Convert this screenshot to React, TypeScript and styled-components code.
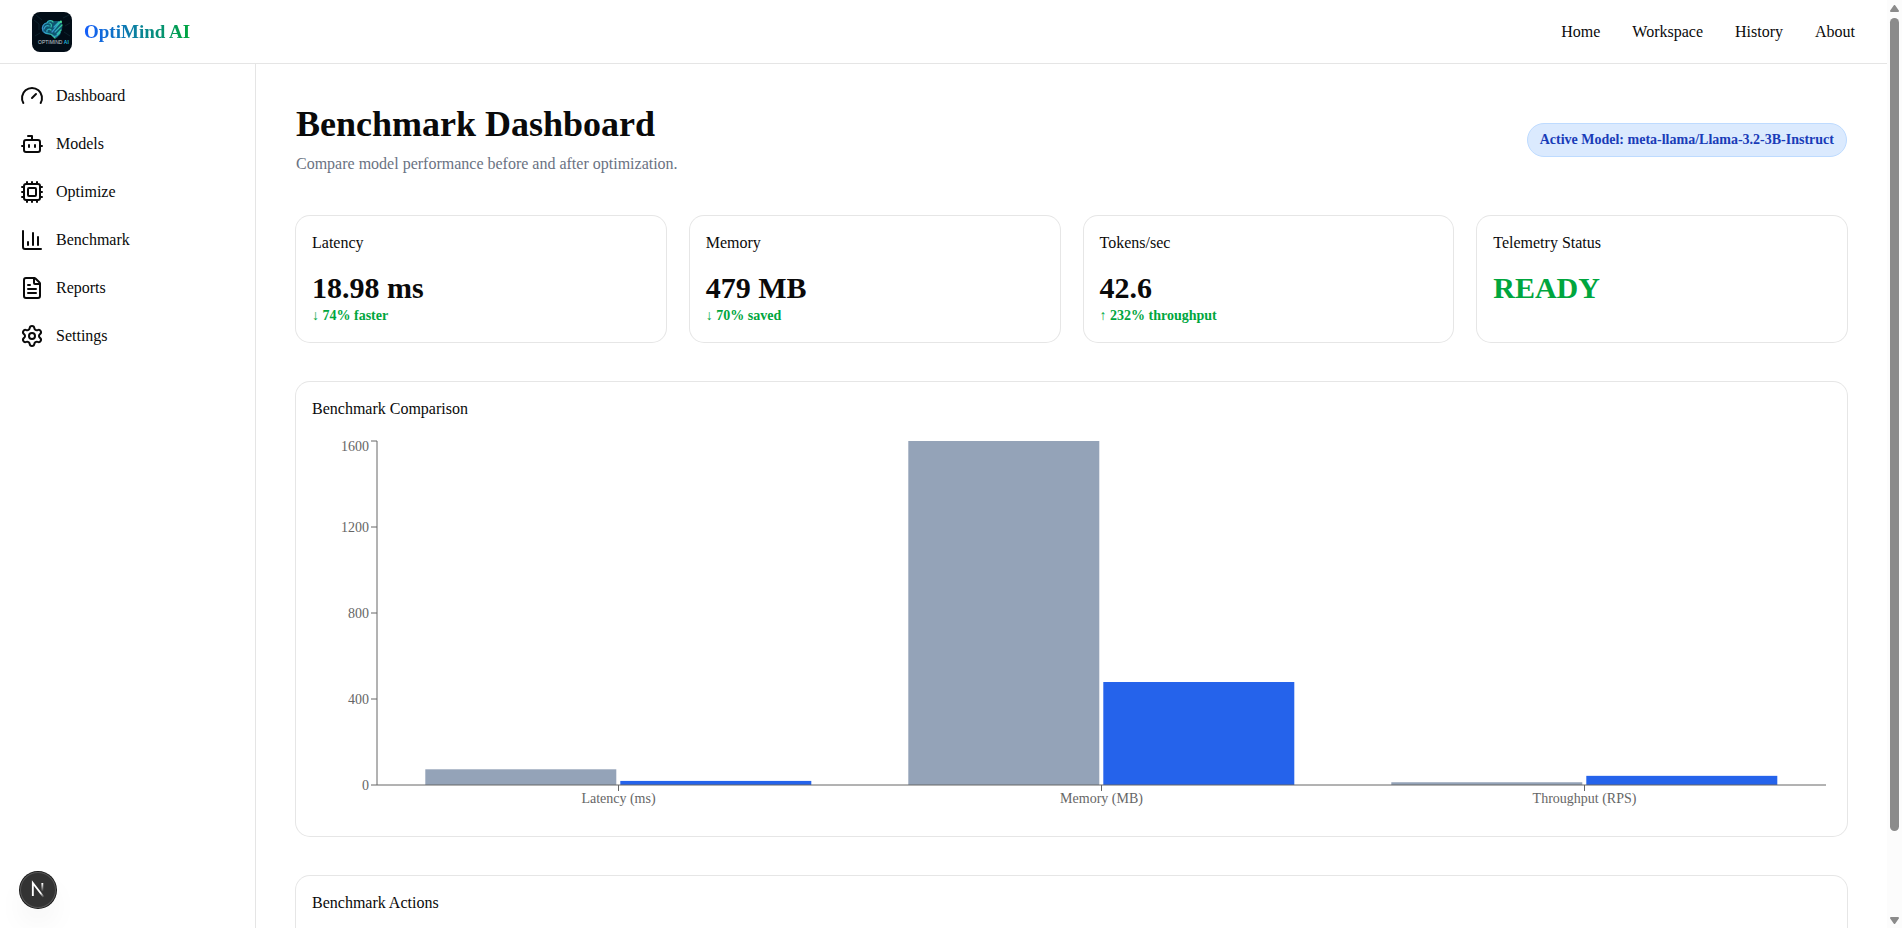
import React, { useEffect, useRef, useState } from "react";
import styled, { createGlobalStyle } from "styled-components";
import { Gauge, Bot, Cpu, ChartColumn, FileText, Settings } from "lucide-react";

const GlobalStyle = createGlobalStyle`
  *, *::before, *::after { box-sizing: border-box; }
  body {
    margin: 0;
    background: #ffffff;
    color: #0a0a0a;
    font-family: "Liberation Serif", "Times New Roman", serif;
    font-size: 16px;
    line-height: 24px;
  }
  h1, h2, p { margin: 0; }
  a { color: inherit; text-decoration: none; }
`;

const Shell = styled.div`
  display: flex;
  height: 100vh;
`;

const Page = styled.div`
  flex: 1;
  min-width: 0;
  display: flex;
  flex-direction: column;
`;

const Header = styled.header`
  flex: none;
  height: 64px;
  padding: 0 32px;
  display: flex;
  align-items: center;
  justify-content: space-between;
  border-bottom: 1px solid #e5e5e5;
`;

const Brand = styled.a`
  display: flex;
  align-items: center;
  gap: 12px;
`;

const BrandName = styled.span`
  font-size: 19px;
  line-height: 28px;
  font-weight: 700;
  color: transparent;
  background: linear-gradient(to right, #155dfc, #00a63e);
  background-clip: text;
`;

const TopNav = styled.nav`
  display: flex;
  gap: 32px;
`;

const Body = styled.div`
  flex: 1;
  min-height: 0;
  display: flex;
`;

const Sidebar = styled.nav`
  flex: none;
  width: 256px;
  padding: 8px;
  border-right: 1px solid #e5e5e5;
`;

const SideLink = styled.a`
  display: flex;
  align-items: center;
  gap: 12px;
  height: 48px;
  padding: 0 12px;
`;

const Main = styled.main`
  flex: 1;
  min-width: 0;
  padding: 40px;
  display: flex;
  flex-direction: column;
  gap: 40px;
  overflow-y: auto;
  scrollbar-width: none;

  & > * { flex: none; }
`;

const TitleRow = styled.div`
  display: flex;
  align-items: center;
  justify-content: space-between;
`;

const Title = styled.h1`
  font-size: 36px;
  line-height: 40px;
  font-weight: 700;
`;

const Subtitle = styled.p`
  margin-top: 8px;
  color: #6a7282;
`;

const ModelBadge = styled.span`
  padding: 6px 12px;
  border: 1px solid #bedbff;
  border-radius: 17px;
  background: #dbeafe;
  color: #193cb8;
  font-size: 14px;
  line-height: 20px;
  font-weight: 700;
`;

const StatGrid = styled.div`
  display: grid;
  grid-template-columns: repeat(4, 1fr);
  gap: 24px;
`;

const Card = styled.section`
  display: flex;
  flex-direction: column;
  gap: 16px;
  min-height: 120px;
  padding: 16px;
  border-radius: 14px;
  box-shadow: 0 0 0 1px #e6e6e6;
`;

const CardTitle = styled.h2`
  font-size: 16px;
  line-height: 22px;
  font-weight: 400;
`;

const StatValue = styled.p<{ $good?: boolean }>`
  font-size: 30px;
  line-height: 36px;
  font-weight: 700;
  color: ${(p) => (p.$good ? "#00a63e" : "inherit")};
`;

const StatNote = styled.p`
  font-size: 14px;
  line-height: 20px;
  font-weight: 700;
  color: #00a63e;
`;

const ChartBox = styled.div`
  height: 384px;

  svg { display: block; }
  text { font-size: 14px; fill: #666666; }
`;

const DevButton = styled.button`
  position: fixed;
  left: 20px;
  bottom: 20px;
  width: 36px;
  height: 36px;
  padding: 0;
  border: 0;
  border-radius: 50%;
  background: #333333;
  box-shadow: 0 0 0 1px #171717, inset 0 0 0 1px #545454,
    0 16px 32px -8px rgba(0, 0, 0, 0.14);

  svg { display: block; }
`;

const Rail = styled.div`
  flex: none;
  width: 15px;
  padding: 5px 3px 4px;
  display: flex;
  flex-direction: column;
  align-items: center;
  gap: 6px;
  background: #fcfcfc;

  svg { display: block; flex: none; }
`;

const RailTrack = styled.div`
  flex: 1;
  width: 9px;
`;

const RailThumb = styled.div`
  height: 91%;
  border-radius: 5px;
  background: #8b8b8b;
`;

const sideItems = [
  { label: "Dashboard", Icon: Gauge },
  { label: "Models", Icon: Bot },
  { label: "Optimize", Icon: Cpu },
  { label: "Benchmark", Icon: ChartColumn },
  { label: "Reports", Icon: FileText },
  { label: "Settings", Icon: Settings },
];

const stats = [
  { title: "Latency", value: "18.98 ms", note: "↓ 74% faster" },
  { title: "Memory", value: "479 MB", note: "↓ 70% saved" },
  { title: "Tokens/sec", value: "42.6", note: "↑ 232% throughput" },
  { title: "Telemetry Status", value: "READY", good: true },
];

const chartData = [
  { name: "Latency (ms)", before: 73, after: 18.98 },
  { name: "Memory (MB)", before: 1600, after: 479 },
  { name: "Throughput (RPS)", before: 12.8, after: 42.6 },
];

const yTicks = [0, 400, 800, 1200, 1600];

function BenchmarkChart() {
  const box = useRef<HTMLDivElement>(null);
  const [width, setWidth] = useState(0);

  useEffect(() => {
    const el = box.current;
    if (!el) return;
    const measure = () => setWidth(el.clientWidth);
    measure();
    const observer = new ResizeObserver(measure);
    observer.observe(el);
    return () => observer.disconnect();
  }, []);

  const left = 65;
  const top = 5;
  const bottom = 349;
  const right = width - 5;
  const band = (right - left) / chartData.length;
  const barWidth = Math.floor((band * 0.8 - 4) / 2);
  const y = (v: number) => bottom - (v / 1600) * (bottom - top);

  return (
    <ChartBox ref={box}>
      {width > 200 && (
        <svg width={width} height={384} role="img" aria-label="Benchmark comparison">
          {chartData.map((d, i) => {
            const x = left + band * (i + 0.1);
            return (
              <g key={d.name}>
                <rect x={x} y={y(d.before)} width={barWidth} height={bottom - y(d.before)} fill="#94a3b8" />
                <rect x={x + barWidth + 4} y={y(d.after)} width={barWidth} height={bottom - y(d.after)} fill="#2563eb" />
              </g>
            );
          })}
          <g stroke="#666666">
            <line x1={left} x2={right} y1={bottom} y2={bottom} />
            {chartData.map((d, i) => {
              const x = left + band * (i + 0.5);
              return <line key={d.name} x1={x} x2={x} y1={bottom} y2={bottom + 6} />;
            })}
            <line x1={left} x2={left} y1={top} y2={bottom} />
            {yTicks.map((t) => (
              <line key={t} x1={left - 6} x2={left} y1={y(t)} y2={y(t)} />
            ))}
          </g>
          {chartData.map((d, i) => (
            <text key={d.name} x={left + band * (i + 0.5)} y={bottom + 18} textAnchor="middle">
              {d.name}
            </text>
          ))}
          {yTicks.map((t) => (
            <text key={t} x={left - 8} y={Math.max(y(t), 10) + 5} textAnchor="end">
              {t}
            </text>
          ))}
        </svg>
      )}
    </ChartBox>
  );
}

function BrandLogo() {
  return (
    <svg width="40" height="40" viewBox="0 0 40 40" aria-hidden="true">
      <defs>
        <linearGradient id="brain" x1="0" y1="0" x2="1" y2="0">
          <stop offset="0" stopColor="#3a8fd0" />
          <stop offset="0.5" stopColor="#2cb0bd" />
          <stop offset="1" stopColor="#3fd68e" />
        </linearGradient>
      </defs>
      <rect width="40" height="40" rx="8" fill="#020d17" />
      <g fill="none" stroke="#12303a" strokeWidth="0.6">
        <path d="M2 8 L7 12 L7 18 M4 3 L10 8 M31 6 L37 3 M33 14 L38 11 M32 20 L38 24 M3 24 L8 21" />
      </g>
      <path
        d="M10 18 C9 14 12 11 15 10 C17 7.500 20 8 22 9 L29 9 L30 12 C31 15 30 17 29 20 C29 23 26 24 25 26 L22 26 C21 24 19 23 17 22 C13 22 11 21 10 18 Z"
        fill="#0e5470"
      />
      <g fill="none" stroke="url(#brain)" strokeWidth="1.2" strokeLinecap="round">
        <path d="M11 19 C9 15 12 11 15 11 C16 8 20 8 21 10 M12 17 C13 14 15 13 17 14 M15 20 C14 18 17 16 19 18 M17 11 C19 11 20 13 19 15 M12 20 C15 23 18 21 20 23 L23 26" />
        <path d="M20 20 L29 9 M22 15 L27 10 M23 20 L30 13 M25 22 L29 18 M21 24 C24 25 27 23 28 20" />
      </g>
      <circle cx="29" cy="10" r="1" fill="#4be39a" />
      <text x="6" y="32" fontFamily="Liberation Sans, Arial, sans-serif" fontSize="5" fill="#c4ced6">
        OPTIMIND{" "}
        <tspan fill="#20b5dc" fontWeight="700">
          AI
        </tspan>
      </text>
    </svg>
  );
}

function DevMark() {
  return (
    <svg width="36" height="36" viewBox="0 0 36 36" fill="none" aria-hidden="true">
      <g transform="translate(10.5 10)">
        <path d="M13.3 15.2 L2.34 1 V14" stroke="url(#mark-a)" strokeWidth="1.86" />
        <path d="M11.825 1 V13.1" stroke="url(#mark-b)" strokeWidth="1.86" />
      </g>
      <defs>
        <linearGradient id="mark-a" x1="9.95555" y1="11.1226" x2="15.4778" y2="17.9671" gradientUnits="userSpaceOnUse">
          <stop stopColor="white" />
          <stop offset="0.604072" stopColor="white" stopOpacity="0" />
        </linearGradient>
        <linearGradient id="mark-b" x1="11.8222" y1="1.40039" x2="11.791" y2="9.62542" gradientUnits="userSpaceOnUse">
          <stop stopColor="white" />
          <stop offset="1" stopColor="white" stopOpacity="0" />
        </linearGradient>
      </defs>
    </svg>
  );
}

export default function App() {
  return (
    <>
      <GlobalStyle />
      <Shell>
        <Page>
          <Header>
            <Brand href="#">
              <BrandLogo />
              <BrandName>OptiMind AI</BrandName>
            </Brand>
            <TopNav aria-label="Main">
              <a href="#home">Home</a>
              <a href="#workspace">Workspace</a>
              <a href="#history">History</a>
              <a href="#about">About</a>
            </TopNav>
          </Header>
          <Body>
            <Sidebar aria-label="Workspace">
              {sideItems.map(({ label, Icon }) => (
                <SideLink key={label} href={`#${label.toLowerCase()}`}>
                  <Icon size={24} />
                  {label}
                </SideLink>
              ))}
            </Sidebar>
            <Main>
              <TitleRow>
                <div>
                  <Title>Benchmark Dashboard</Title>
                  <Subtitle>Compare model performance before and after optimization.</Subtitle>
                </div>
                <ModelBadge>Active Model: meta-llama/Llama-3.2-3B-Instruct</ModelBadge>
              </TitleRow>
              <StatGrid>
                {stats.map((s) => (
                  <Card key={s.title}>
                    <CardTitle>{s.title}</CardTitle>
                    <div>
                      <StatValue $good={s.good}>{s.value}</StatValue>
                      {s.note && <StatNote>{s.note}</StatNote>}
                    </div>
                  </Card>
                ))}
              </StatGrid>
              <Card>
                <CardTitle>Benchmark Comparison</CardTitle>
                <BenchmarkChart />
              </Card>
              <Card>
                <CardTitle>Benchmark Actions</CardTitle>
              </Card>
            </Main>
          </Body>
        </Page>
        <Rail aria-hidden="true">
          <svg width="9" height="7" viewBox="0 0 9 7">
            <path d="M4.500 1 L8 6 H1 Z" fill="#8b8b8b" stroke="#8b8b8b" strokeLinejoin="round" strokeWidth="2" />
          </svg>
          <RailTrack>
            <RailThumb />
          </RailTrack>
          <svg width="9" height="7" viewBox="0 0 9 7">
            <path d="M4.500 6 L8 1 H1 Z" fill="#8b8b8b" stroke="#8b8b8b" strokeLinejoin="round" strokeWidth="2" />
          </svg>
        </Rail>
      </Shell>
      <DevButton type="button" aria-label="Open developer tools">
        <DevMark />
      </DevButton>
    </>
  );
}
